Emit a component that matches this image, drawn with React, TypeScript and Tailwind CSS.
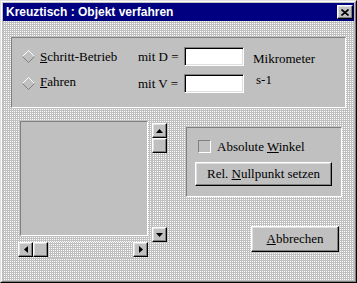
import React from 'react';

const raised =
  'border border-t-white border-l-white border-r-black border-b-black bg-[#c0c0c0] shadow-[inset_-1px_-1px_#808080,inset_1px_1px_#dfdfdf]';
const sunkenField =
  'border border-t-[#808080] border-l-[#808080] border-r-white border-b-white shadow-[inset_1px_1px_#000,inset_-1px_-1px_#dfdfdf]';
const groupBox =
  'border border-t-[#808080] border-l-[#808080] border-r-white border-b-white bg-[#c0c0c0]';
const dither =
  'bg-[image:conic-gradient(#ffffff_0_25%,#c0c0c0_0_100%)] bg-[length:2px_2px]';

function Diamond() {
  return (
    <svg width="13" height="13" viewBox="0 0 13 13" className="shrink-0">
      <polygon points="6.5,0.5 12.5,6.5 6.5,12.5 0.5,6.5" fill="#c0c0c0" />
      <polyline points="0.5,6.5 6.5,0.5 12.5,6.5" fill="none" stroke="#ffffff" strokeWidth="1" />
      <polyline points="0.5,6.5 6.5,12.5 12.5,6.5" fill="none" stroke="#808080" strokeWidth="1" />
    </svg>
  );
}

function Arrow({ dir }: { dir: 'up' | 'down' | 'left' | 'right' }) {
  const pts = {
    up: '3.5,0 7,4 0,4',
    down: '0,0 7,0 3.5,4',
    left: '4,0 4,7 0,3.5',
    right: '0,0 4,3.5 0,7',
  }[dir];
  const vertical = dir === 'up' || dir === 'down';
  return (
    <svg width={vertical ? 7 : 4} height={vertical ? 4 : 7} viewBox={vertical ? '0 0 7 4' : '0 0 4 7'}>
      <polygon points={pts} fill="#000" />
    </svg>
  );
}

function ScrollButton({ dir }: { dir?: 'up' | 'down' | 'left' | 'right' }) {
  return (
    <div className={`w-[15px] h-[15px] shrink-0 flex items-center justify-center ${raised}`}>
      {dir && <Arrow dir={dir} />}
    </div>
  );
}

function Field() {
  return <div className={`w-[60px] h-[19px] bg-white ${sunkenField}`} />;
}

export default function App() {
  return (
    <div className="w-[357px] h-[283px] border border-t-[#dfdfdf] border-l-[#dfdfdf] border-r-black border-b-black">
      <div className="w-full h-full border border-t-white border-l-white border-r-[#808080] border-b-[#808080] bg-[#c0c0c0] p-px flex flex-col">
        {/* title bar */}
        <div className="h-[18px] shrink-0 bg-[#000080] flex items-center justify-between pl-[3px] pr-[1px] font-['Liberation_Sans',Arial,sans-serif]">
          <span className="text-white font-bold text-[12px] leading-none">
            Kreuztisch : Objekt verfahren
          </span>
          <div className={`w-[16px] h-[14px] flex items-center justify-center ${raised}`}>
            <svg width="8" height="7" viewBox="0 0 8 7">
              <path d="M0.5 0.5L7.5 6.5M7.5 0.5L0.5 6.5" stroke="#000" strokeWidth="1.6" />
            </svg>
          </div>
        </div>

        <div className="flex-1 flex flex-col font-['Liberation_Serif','DejaVu_Serif',serif]">
          <div className={`flex-1 flex flex-col text-black text-[13px] ${dither}`}>
            {/* mode group */}
            <div className={`ml-[8px] mt-[16px] w-[335px] h-[71px] pt-[9px] flex flex-col ${groupBox}`}>
              <div className="flex items-center h-[19px]">
                <div className="w-[126px] pl-[10px] flex items-center">
                  <Diamond />
                  <span className="ml-[5px]">
                    <span className="underline">S</span>chritt-Betrieb
                  </span>
                </div>
                <span className="w-[46px]">mit D =</span>
                <Field />
                <span className="ml-[9px] mt-[4px]">Mikrometer</span>
              </div>
              <div className="flex items-center h-[19px] mt-[8px]">
                <div className="w-[126px] pl-[10px] flex items-center">
                  <Diamond />
                  <span className="ml-[5px] mb-[4px]">
                    <span className="underline">F</span>ahren
                  </span>
                </div>
                <span className="w-[46px]">mit V =</span>
                <Field />
                <span className="ml-[12px] mb-[8px]">s-1</span>
              </div>
            </div>

            {/* lower area */}
            <div className="flex mt-[13px] ml-[15px]">
              <div className="flex flex-col w-[149px]">
                <div className="flex items-start">
                  <div className={`ml-[2px] w-[128px] h-[115px] ${groupBox}`} />
                  <div className="ml-[4px] mt-[2px] w-[15px] h-[119px] flex flex-col">
                    <ScrollButton dir="up" />
                    <ScrollButton />
                    <div className={`flex-1 ${dither}`} />
                    <ScrollButton dir="down" />
                  </div>
                </div>
                <div className="w-[130px] h-[16px] flex">
                  <ScrollButton dir="left" />
                  <ScrollButton />
                  <div className={`flex-1 ${dither}`} />
                  <ScrollButton dir="right" />
                </div>
              </div>

              <div className="ml-[19px] flex flex-col">
                <div className={`mt-[6px] w-[156px] h-[70px] pt-[12px] pl-[8px] flex flex-col ${groupBox}`}>
                  <div className="ml-[3px] h-[13px] flex items-center">
                    <div className="w-[13px] h-[13px] bg-[#c0c0c0] border border-t-[#808080] border-l-[#808080] border-r-white border-b-white" />
                    <span className="ml-[6px] leading-[13px]">
                      Absolute <span className="underline">W</span>inkel
                    </span>
                  </div>
                  <div className={`mt-[9px] w-[137px] h-[24px] flex items-center justify-center ${raised}`}>
                    <span>
                      Rel. <span className="underline">N</span>ullpunkt setzen
                    </span>
                  </div>
                </div>
                <div className={`ml-[65px] mt-[29px] w-[88px] h-[26px] flex items-center justify-center ${raised}`}>
                  <span>
                    <span className="underline">A</span>bbrechen
                  </span>
                </div>
              </div>
            </div>
          </div>
        </div>
      </div>
    </div>
  );
}
